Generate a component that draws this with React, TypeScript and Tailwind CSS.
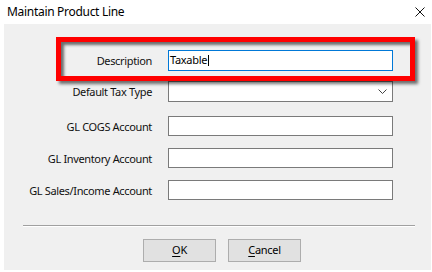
import React from "react";

const font = { fontFamily: '"Segoe UI", "Noto Sans", "Open Sans", sans-serif' };

function Field({ label, children }: { label: string; children: React.ReactNode }) {
	return (
		<div className="flex items-center">
			<div className="w-[148px] text-right text-[11px] leading-none tracking-[-0.35px] text-[#111]">{label}</div>
			<div className="ml-[16px]">{children}</div>
		</div>
	);
}

function TextBox({ h = "h-[20px]" }: { h?: string }) {
	return <div className={`w-[225px] border border-[#7a7a7a] bg-white ${h}`} />;
}

export default function App() {
	return (
		<div className="flex h-[272px] w-[432px] flex-col bg-white" style={font}>
			<div className="flex h-[24px] items-center justify-between pl-[7px] pr-[7px]">
				<span className="text-[12px] tracking-[-0.3px] text-black">Maintain Product Line</span>
				<svg width="10" height="10" viewBox="0 0 10 10" className="mt-[-1px]">
					<path d="M0.5 0.5 L9.5 9.5 M9.5 0.5 L0.5 9.5" stroke="#111" strokeWidth="1" />
				</svg>
			</div>
			<div className="relative ml-[4px] mr-[1px] flex h-[246px] flex-col bg-[#f0f0f0] pt-[26px]">
				<div className="flex flex-col">
					<Field label="Description">
						<div className="flex h-[21px] w-[225px] items-center border border-[#0078d7] bg-white pl-[1px] text-[11px] tracking-[-0.3px] text-black">
							<span>Taxable</span>
							<span className="ml-[1px] h-[11px] border-l border-black" />
						</div>
					</Field>
					<div className="mt-[10px]">
						<Field label="Default Tax Type">
							<div className="flex h-[21px] w-[225px] items-center justify-end border border-[#7a7a7a] bg-white pr-[5px]">
								<svg width="9" height="5" viewBox="0 0 9 5">
									<path d="M0.5 0.5 L4.5 4.5 L8.5 0.5" fill="none" stroke="#444" strokeWidth="1" />
								</svg>
							</div>
						</Field>
					</div>
					<div className="mt-[14px]">
						<Field label="GL COGS Account">
							<TextBox />
						</Field>
					</div>
					<div className="mt-[12px]">
						<Field label="GL Inventory Account">
							<TextBox />
						</Field>
					</div>
					<div className="mt-[12px]">
						<Field label="GL Sales/Income Account">
							<TextBox />
						</Field>
					</div>
				</div>
				<div className="ml-[19px] mr-[16px] mt-[25px] h-[2px] border-t border-b border-t-[#a0a0a0] border-b-white" />
				<div className="mt-[12px] flex gap-[12px] pl-[139px]">
					<button className="flex h-[23px] w-[73px] items-center justify-center border border-[#adadad] bg-[#e1e1e1] text-[11px] tracking-[-0.3px] text-black">
						<span className="underline decoration-1 underline-offset-2">O</span>K
					</button>
					<button className="flex h-[23px] w-[73px] items-center justify-center border border-[#adadad] bg-[#e1e1e1] text-[11px] tracking-[-0.3px] text-black">
						<span className="underline decoration-1 underline-offset-2">C</span>ancel
					</button>
				</div>
				<div className="absolute left-[52px] top-[13px] h-[44px] w-[359px] border-[5px] border-[#ff0000] shadow-[3px_3px_3px_rgba(0,0,0,0.55),inset_3px_3px_3px_rgba(0,0,0,0.55)]" />
			</div>
		</div>
	);
}
